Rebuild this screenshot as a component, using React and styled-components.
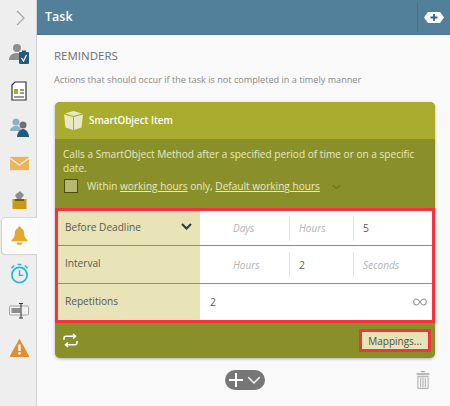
import React from "react";
import styled, { createGlobalStyle } from "styled-components";

const GlobalStyle = createGlobalStyle`
  html, body { margin: 0; padding: 0; }
  body { font-family: "Open Sans", "Liberation Sans", sans-serif; background: #f9f9f9; }
`;

const Page = styled.div`
  display: flex;
  width: 450px;
  height: 406px;
  overflow: hidden;
  background: #f9f9f9;
`;

const Sidebar = styled.nav`
  width: 36px;
  height: 100%;
  flex: none;
  display: flex;
  flex-direction: column;
  background: #eeeeee;
  border-right: 1px solid #d2d2d2;
`;

const Toggle = styled.div`
  height: 35px;
  display: flex;
  align-items: center;
  justify-content: center;
  padding-left: 4px;
`;

const Tab = styled.div`
  height: ${(p) => p.$h}px;
  margin-left: ${(p) => (p.$active ? 2 : 0)}px;
  margin-right: ${(p) => (p.$active ? -1 : 0)}px;
  display: flex;
  align-items: center;
  justify-content: center;
  padding-left: ${(p) => (p.$active ? 0 : 2)}px;
  background: ${(p) => (p.$active ? "#fbfbfb" : "transparent")};
  border-radius: ${(p) => (p.$active ? "3px 0 0 3px" : 0)};
  box-shadow: ${(p) => (p.$active ? "-1px 1px 1px #cfcfcf, 0 -1px 0 #d8d8d8" : "none")};
`;

const Main = styled.main`
  flex: 1;
  min-width: 0;
  display: flex;
  flex-direction: column;
`;

const Header = styled.header`
  height: 35px;
  flex: none;
  display: flex;
  align-items: center;
  background: #527f99;
  border-bottom: 1px solid #4a7690;
  box-sizing: border-box;
  color: #fff;
`;

const HeaderTitle = styled.h1`
  flex: 1;
  margin: 0 0 2px 8px;
  font-size: 12.5px;
  font-weight: 600;
`;

const HeaderAction = styled.div`
  width: 32px;
  height: 29px;
  display: flex;
  align-items: center;
  justify-content: center;
  border-left: 1px solid #44708a;
`;

const Content = styled.div`
  padding: 13px 15px 0 17px;
`;

const SectionTitle = styled.h2`
  margin: 0;
  font-size: 11.5px;
  line-height: 16px;
  font-weight: 400;
  color: #6f6f6f;
`;

const SectionHint = styled.p`
  margin: 9px 0 0;
  font-size: 9.15px;
  line-height: 14px;
  color: #8a8a8a;
`;

const Card = styled.section`
  margin: 15px 0 0 1px;
  width: 380px;
  border-radius: 5px;
  background: #8a9029;
  box-shadow: 0 1px 3px rgba(0, 0, 0, 0.3);
`;

const CardHead = styled.div`
  height: 37px;
  display: flex;
  align-items: center;
  gap: 6px;
  padding-left: 9px;
  border-radius: 5px 5px 0 0;
  background: #a9ac2e;
  color: #fff;
  font-size: 9.8px;
  font-weight: 600;
`;

const CardIntro = styled.div`
  height: 69px;
  box-sizing: border-box;
  padding: 8px 8px 0;
  color: #e9e8c4;
  font-size: 10.1px;
  line-height: 14px;
`;

const WorkRow = styled.div`
  display: flex;
  align-items: center;
  margin-top: 4px;
`;

const Check = styled.span`
  width: 12px;
  height: 12px;
  flex: none;
  margin: 0 9px 0 1px;
  background: #b6b874;
  border: 1px solid #494c10;
`;

const Link = styled.a`
  text-decoration: underline;
`;

const Table = styled.div`
  border: 3px solid #f4333f;
  background: #fff;
`;

const Row = styled.div`
  height: ${(p) => p.$h}px;
  display: flex;
  box-sizing: border-box;
  border-bottom: ${(p) => (p.$last ? "none" : "1px solid #959a2f")};
`;

const Label = styled.div`
  width: 142px;
  flex: none;
  display: flex;
  align-items: center;
  justify-content: space-between;
  box-sizing: border-box;
  padding: 0 8px 3px 7px;
  background: #e8e4b8;
  color: #575757;
  font-size: 10.1px;
`;

const Cells = styled.div`
  flex: 1;
  display: grid;
  grid-template-columns: 89px 64px 1fr;
  align-items: center;
`;

const Cell = styled.div`
  height: 25px;
  display: flex;
  align-items: center;
  box-sizing: border-box;
  padding-left: ${(p) => (p.$first ? 33 : 9)}px;
  border-left: ${(p) => (p.$first ? "none" : "1px solid #e4e4e4")};
  font-size: ${(p) => (p.$value ? 10.4 : 10)}px;
  font-style: ${(p) => (p.$value ? "normal" : "italic")};
  color: ${(p) => (p.$value ? "#5f5f5f" : "#b2b2b2")};
`;

const WideCell = styled.div`
  flex: 1;
  display: flex;
  align-items: center;
  justify-content: space-between;
  padding: 0 5px 0 10px;
  color: #5f5f5f;
  font-size: 10.4px;
`;

const CardFoot = styled.div`
  height: 35px;
  display: flex;
  align-items: center;
  justify-content: space-between;
  padding: 0 4px 0 8px;
`;

const MappingsButton = styled.button`
  width: 72px;
  height: 23px;
  padding: 0;
  border: 3px solid #f4333f;
  background: #e8e4b8;
  color: #4e4e3c;
  font-family: inherit;
  font-size: 10px;
`;

const Actions = styled.div`
  display: flex;
  align-items: center;
  margin-top: 12px;
  padding-right: 5px;
`;

const AddPill = styled.div`
  margin-left: 171px;
  width: 40px;
  height: 20px;
  border-radius: 10px;
  background: #777777;
  display: flex;
  align-items: center;
  justify-content: center;
  gap: 4px;
`;

const Trash = styled.div`
  margin-left: auto;
  display: flex;
`;

const UserTaskIcon = () => (
  <svg width="20" height="21" viewBox="0 0 20 21">
    <circle cx="8" cy="5" r="4" fill="#8f8f8f" />
    <path d="M0 17c0-4 3-7 7-7s4 1 4 2v5z" fill="#8f8f8f" />
    <rect x="10" y="9" width="10" height="12" rx="1" fill="#245a7c" />
    <rect x="13" y="7.500" width="4" height="3" fill="#245a7c" />
    <path d="M12.500 15l2 3 3-6" fill="none" stroke="#fff" strokeWidth="1.2" />
  </svg>
);

const FormIcon = () => (
  <svg width="16" height="20" viewBox="0 0 16 20">
    <path d="M1 4l3-3h11v18H1z" fill="#fff" stroke="#333" strokeWidth="1.2" />
    <rect x="3" y="8" width="4" height="5" fill="#a9a92c" />
    <path d="M9 9h4M9 12h4M3 16h10" stroke="#333" strokeWidth="1.2" />
  </svg>
);

const UsersIcon = () => (
  <svg width="21" height="19" viewBox="0 0 21 19">
    <circle cx="7" cy="4" r="3.500" fill="#8fb0c4" />
    <path d="M1 13c0-3 3-5 6-5s5 2 5 5z" fill="#8fb0c4" />
    <circle cx="14" cy="7" r="3.500" fill="#6f6f6f" />
    <path d="M8 19c0-4 3-8 6-8s6 4 6 8z" fill="#245a7c" />
  </svg>
);

const MailIcon = () => (
  <svg width="19" height="15" viewBox="0 0 20 15">
    <rect width="20" height="14" y="0.500" fill="#edb45f" />
    <path d="M0 2l10 7 10-7" fill="none" stroke="#fbefd9" strokeWidth="1.300" />
  </svg>
);

const BoxIcon = () => (
  <svg width="15" height="20" viewBox="0 0 15 20">
    <path d="M3 5l5-4 4 4-3 4H5z" fill="#8d8d8d" />
    <rect x="0.500" y="9" width="14" height="10" fill="#c99a12" />
    <rect x="3" y="9" width="9" height="2" fill="#6e5a14" />
  </svg>
);

const BellIcon = () => (
  <svg width="17" height="20" viewBox="0 0 18 20">
    <path d="M9 0c1 0 1.500.7 1.500 1.500C13 2.500 14 5 14 8c0 3 1.500 5 3.500 6.500v1H.5v-1C2.500 13 4 11 4 8c0-3 1-5.500 3.500-6.500C7.500.7 8 0 9 0z" fill="#e3a92c" />
    <path d="M6 17h6c0 2-1.500 2.500-3 2.500S6 19 6 17z" fill="#e3a92c" />
  </svg>
);

const ClockIcon = () => (
  <svg width="19" height="21" viewBox="0 0 20 21" fill="none" stroke="#22b8d2">
    <circle cx="10" cy="12" r="8" strokeWidth="1.800" />
    <path d="M10 7v5.500h4" strokeWidth="1.500" />
    <path d="M1.500 5l3-3M18.500 5l-3-3M8 1h4" strokeWidth="1.500" />
  </svg>
);

const FieldIcon = () => (
  <svg width="20" height="16" viewBox="0 0 20 16">
    <rect x="0.500" y="3" width="19" height="9" rx="1" fill="#f1f1f1" stroke="#a2a2a2" />
    <rect x="2.500" y="5" width="9" height="5" fill="#8e8e8e" />
    <path d="M10 .5h4M12 .5v14.500M10 15h4" stroke="#333" strokeWidth="1" fill="none" />
  </svg>
);

const WarningIcon = () => (
  <svg width="19" height="18" viewBox="0 0 19 18">
    <path d="M9.500 0.500L18.800 17.500H.2z" fill="#de8f34" stroke="#de8f34" strokeLinejoin="round" />
    <rect x="8.300" y="5.500" width="2.400" height="6.500" fill="#fff" />
    <circle cx="9.500" cy="14.300" r="1.400" fill="#fff" />
  </svg>
);

const CubeIcon = () => (
  <svg width="19" height="19" viewBox="0 0 19 19">
    <path d="M9.500 0L18 2.500 9.500 5 1 2.500z" fill="#e9e8c4" />
    <path d="M0 3.500l9 2.500v13l-7.500-2.500zM19 3.500L10 6v13l7.500-2.500z" fill="#e9e8c4" />
  </svg>
);

const RepeatIcon = () => (
  <svg width="15" height="15" viewBox="0 0 15 15" fill="none" stroke="#fff" strokeWidth="1.500">
    <path d="M1 7V5c0-1 .7-1.700 1.700-1.700H12M10 1l2.500 2.300L10 5.500" />
    <path d="M14 8v2c0 1-.7 1.700-1.700 1.700H3M5 9.500l-2.500 2.200L5 14" />
  </svg>
);

const TrashIcon = () => (
  <svg width="14" height="20" viewBox="0 0 15 20" fill="none" stroke="#a5a5a5">
    <path d="M5.500 1h4M0.500 3.500h14" strokeWidth="1.500" />
    <path d="M2 6h11v13H2zM5 7v11M7.500 7v11M10 7v11" />
  </svg>
);

const DownArrow = ({ className, color, width = 11, height = 7, weight = 1.5 }) => (
  <svg className={className} width={width} height={height} viewBox="0 0 11 7" fill="none" stroke={color} strokeWidth={weight}>
    <path d="M1 1l4.500 4.500L10 1" />
  </svg>
);

const WorkChevron = styled(DownArrow)`
  margin: 2px 0 0 12px;
`;

const rows = [
  { name: "Before Deadline", h: 35, cells: [["Days"], ["Hours"], ["5", true]], select: true },
  { name: "Interval", h: 38, cells: [["Hours"], ["2", true], ["Seconds"]] },
];

export default function App() {
  return (
    <Page>
      <GlobalStyle />
      <Sidebar>
        <Toggle>
          <svg width="9" height="16" viewBox="0 0 9 16" fill="none" stroke="#a5a5a5" strokeWidth="1.200">
            <path d="M1 1l7 7-7 7" />
          </svg>
        </Toggle>
        <Tab $h={37}><UserTaskIcon /></Tab>
        <Tab $h={37}><FormIcon /></Tab>
        <Tab $h={36}><UsersIcon /></Tab>
        <Tab $h={36}><MailIcon /></Tab>
        <Tab $h={37}><BoxIcon /></Tab>
        <Tab $active $h={36}><BellIcon /></Tab>
        <Tab $h={39}><ClockIcon /></Tab>
        <Tab $h={36}><FieldIcon /></Tab>
        <Tab $h={38}><WarningIcon /></Tab>
      </Sidebar>
      <Main>
        <Header>
          <HeaderTitle>Task</HeaderTitle>
          <HeaderAction>
            <svg width="20" height="11" viewBox="0 0 20 11">
              <path d="M4 0h12l4 5.500-4 5.500H4L0 5.500z" fill="#fff" />
              <path d="M10 2v7M6.500 5.500h7" stroke="#2f6483" strokeWidth="1.800" />
            </svg>
          </HeaderAction>
        </Header>
        <Content>
          <SectionTitle>REMINDERS</SectionTitle>
          <SectionHint>Actions that should occur if the task is not completed in a timely manner</SectionHint>
          <Card>
            <CardHead><CubeIcon />SmartObject Item</CardHead>
            <CardIntro>
              Calls a SmartObject Method after a specified period of time or on a specific date.
              <WorkRow>
                <Check />
                <span>Within <Link>working hours</Link> only, <Link>Default working hours</Link></span>
                <WorkChevron color="#6d7222" width={9} height={6} />
              </WorkRow>
            </CardIntro>
            <Table>
              {rows.map((row) => (
                <Row key={row.name} $h={row.h}>
                  <Label>
                    {row.name}
                    {row.select && <DownArrow color="#263c4c" weight={2} />}
                  </Label>
                  <Cells>
                    {row.cells.map(([text, isValue], i) => (
                      <Cell key={i} $first={i === 0} $value={isValue}>{text}</Cell>
                    ))}
                  </Cells>
                </Row>
              ))}
              <Row $h={36} $last>
                <Label>Repetitions</Label>
                <WideCell>
                  2
                  <svg width="14" height="8" viewBox="0 0 14 8" fill="none" stroke="#9a9a9a" strokeWidth="1.100">
                    <path d="M7 4C5.500 1.500 4.500 1 3.300 1 1.800 1 .7 2.300.7 4s1.100 3 2.600 3C4.500 7 5.500 6.500 7 4s2.500-3 3.700-3c1.500 0 2.600 1.300 2.600 3s-1.100 3-2.600 3C9.500 7 8.500 6.500 7 4z" />
                  </svg>
                </WideCell>
              </Row>
            </Table>
            <CardFoot>
              <RepeatIcon />
              <MappingsButton>Mappings...</MappingsButton>
            </CardFoot>
          </Card>
          <Actions>
            <AddPill>
              <svg width="14" height="14" viewBox="0 0 14 14" stroke="#fff" strokeWidth="2">
                <path d="M7 0v14M0 7h14" />
              </svg>
              <DownArrow color="#fff" width={14} height={9} weight={1.1} />
            </AddPill>
            <Trash><TrashIcon /></Trash>
          </Actions>
        </Content>
      </Main>
    </Page>
  );
}
